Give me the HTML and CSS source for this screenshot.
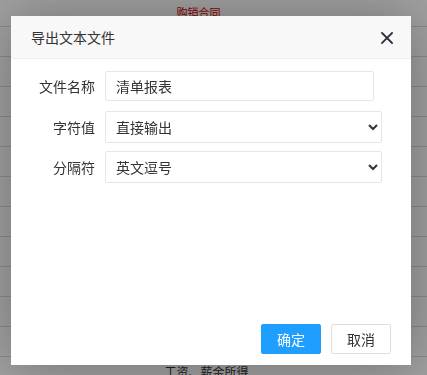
FILE: index.html
```html
<!DOCTYPE html>
<html lang="zh-CN">
<head>
    <meta charset="UTF-8">
    <meta name="viewport" content="width=device-width, initial-scale=1.0">
    <title>导出文本文件</title>
    <link rel="stylesheet" href="styles.css">
</head>
<body>
    <div class="sheet">
        <div class="sheet-row"><span class="sheet-title">购销合同</span></div>
        <div class="sheet-row"></div>
        <div class="sheet-row"></div>
        <div class="sheet-row"></div>
        <div class="sheet-row"></div>
        <div class="sheet-row"></div>
        <div class="sheet-row"></div>
        <div class="sheet-row"></div>
        <div class="sheet-row"></div>
        <div class="sheet-row"></div>
        <div class="sheet-row"></div>
        <div class="sheet-row"></div>
        <div class="sheet-row"><span class="sheet-cell">工资、薪金所得</span></div>
    </div>

    <div class="layer-shade"></div>

    <div class="layer">
        <div class="layer-title">
            <span>导出文本文件</span>
            <a class="layer-close" href="#" title="关闭">
                <svg width="12" height="12" viewBox="0 0 12 12">
                    <path d="M1 1 L11 11 M11 1 L1 11" stroke="#2e2d3c" stroke-width="1.8" stroke-linecap="square"/>
                </svg>
            </a>
        </div>

        <div class="layer-content">
            <div class="form-row form-row-text">
                <label for="filename">文件名称</label>
                <input type="text" id="filename" class="field-text" value="清单报表">
            </div>

            <div class="form-row">
                <label for="charset">字符值</label>
                <select id="charset" class="field-select">
                    <option>直接输出</option>
                    <option>UTF-8</option>
                    <option>GBK</option>
                </select>
            </div>

            <div class="form-row">
                <label for="separator">分隔符</label>
                <select id="separator" class="field-select">
                    <option>英文逗号</option>
                    <option>制表符</option>
                    <option>分号</option>
                </select>
            </div>
        </div>

        <div class="layer-btn">
            <a class="btn btn-primary" href="#">确定</a>
            <a class="btn" href="#">取消</a>
        </div>
    </div>
</body>
</html>
```

FILE: styles.css
```css
body {
    margin: 0;
    font-family: "Noto Sans CJK SC", "Liberation Sans", sans-serif;
    background-color: #fff;
    overflow: hidden;
}

/* page behind the dialog */
.sheet {
    margin-top: -3px;
}

.sheet-row {
    height: 29px;
    border-bottom: 1px solid #dcdcdc;
    display: flex;
    justify-content: center;
    align-items: center;
    font-size: 12px;
    color: #333;
}

.sheet-title {
    color: #d40000;
    font-size: 11px;
    margin-right: 30px;
}

.sheet-cell {
    margin-right: 14px;
}

.layer-shade {
    position: fixed;
    top: 0;
    left: 0;
    right: 0;
    bottom: 0;
    background-color: rgba(0, 0, 0, 0.37);
}

/* dialog */
.layer {
    position: absolute;
    top: 16px;
    left: 11px;
    width: 400px;
    height: 349px;
    background-color: #fff;
    box-shadow: 1px 1px 50px rgba(0, 0, 0, 0.3);
    display: flex;
    flex-direction: column;
}

.layer-title {
    height: 42px;
    padding: 0 18px 0 20px;
    background-color: #f8f8f8;
    border-bottom: 1px solid #eee;
    display: flex;
    align-items: center;
    justify-content: space-between;
    font-size: 14px;
    color: #333;
}

.layer-close {
    display: flex;
    width: 12px;
    height: 12px;
    margin-top: 1px;
}

.layer-content {
    flex: 1;
    padding: 12px 0 0 0;
    display: flex;
    flex-direction: column;
    gap: 8px;
}

.form-row {
    display: flex;
    align-items: center;
}

.form-row-text {
    margin-bottom: 2px;
}

.form-row label {
    width: 84px;
    text-align: right;
    margin-right: 10px;
    font-size: 14px;
    color: #333;
}

.field-text,
.field-select {
    box-sizing: border-box;
    border: 1px solid #e6e6e6;
    border-radius: 2px;
    background-color: #fff;
    font-family: inherit;
    font-size: 14px;
    color: #333;
    outline: none;
}

.field-text {
    width: 269px;
    height: 30px;
    padding: 0 10px;
}

.field-select {
    width: 277px;
    height: 32px;
    padding: 0 6px;
}

/* buttons */
.layer-btn {
    display: flex;
    justify-content: flex-end;
    gap: 10px;
    padding: 0 20px 11px;
}

.btn {
    height: 28px;
    line-height: 28px;
    padding: 0 15px;
    border: 1px solid #dedede;
    border-radius: 2px;
    background-color: #fff;
    color: #333;
    font-size: 14px;
    text-decoration: none;
}

.btn-primary {
    background-color: #1e9fff;
    border-color: #1e9fff;
    color: #fff;
}
```
